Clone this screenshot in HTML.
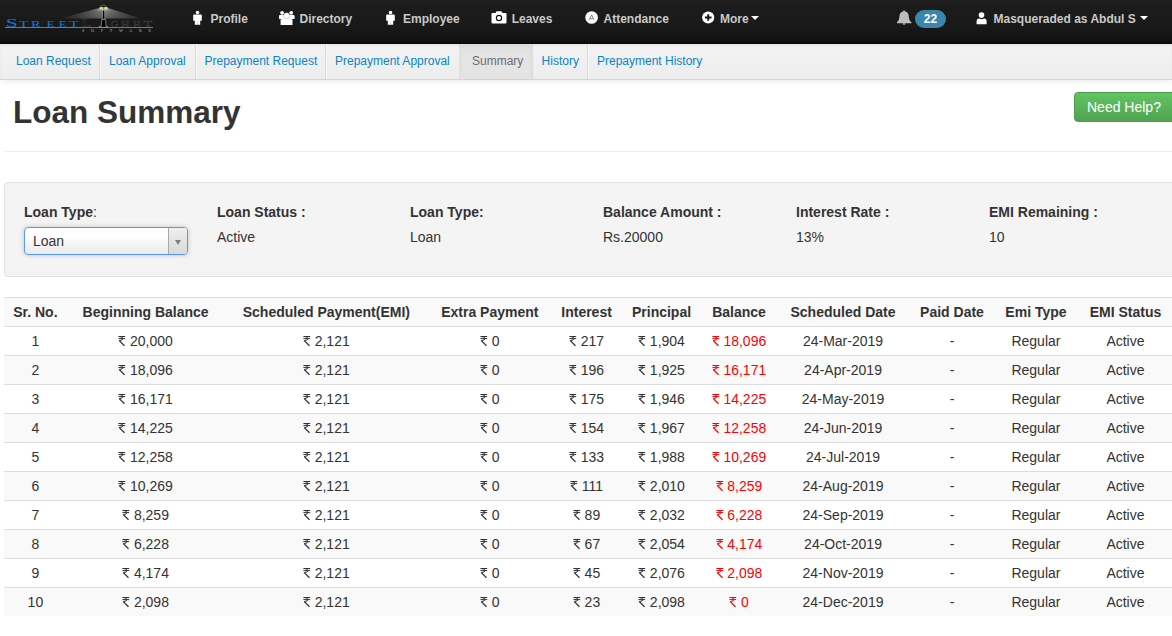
<!DOCTYPE html>
<html><head><meta charset="utf-8">
<style>
*{box-sizing:border-box}
html,body{margin:0;padding:0;width:1172px;height:636px;overflow:hidden;background:#fff}
body{font-family:"Liberation Sans",sans-serif;font-size:14px;color:#333;position:relative}
.abs{position:absolute;white-space:nowrap}
#nav{position:absolute;left:0;top:0;width:1172px;height:44px;background:linear-gradient(#202020,#1c1c1c 10%,#191919 60%,#111 95%,#0a0a0a)}
#nav .t{position:absolute;top:0;line-height:38px;font-weight:bold;font-size:12px;color:#c9c9c9;white-space:nowrap}
#nav svg{position:absolute}
#sub{position:absolute;left:0;top:44px;width:1172px;height:36px;background:linear-gradient(#f3f3f3,#ededed);border-bottom:1px solid #d4d4d4;box-shadow:0 2px 6px rgba(0,0,0,.07), inset 0 2px 2px rgba(0,0,0,.05)}
#sub a{position:absolute;top:0;height:35px;line-height:34px;font-size:12px;color:#0a84c8;text-decoration:none;padding:0 0 0 9px;border-right:1px solid #dadada;box-shadow:1px 0 0 #f7f7f7;white-space:nowrap}
#sub a.act{color:#6d6d6d;background:#e4e4e4;box-shadow:inset 0 3px 5px rgba(0,0,0,.05)}
h1{position:absolute;left:13px;top:90px;margin:0;font-size:31.5px;line-height:44px;font-weight:bold;color:#333}
#hr{position:absolute;left:4px;top:151px;width:1168px;height:1px;background:#eee}
#help{position:absolute;left:1074px;top:92px;width:110px;height:30px;border-radius:4px;background:linear-gradient(#62c462,#51a351);border:1px solid #4a9a4a;color:#fff;font-size:14px;line-height:28px;padding-left:12px;white-space:nowrap}
#well{position:absolute;left:4px;top:182px;width:1180px;height:95px;background:#f4f4f4;border:1px solid #e1e1e1;border-radius:4px}
.lbl{position:absolute;top:204px;font-weight:bold;font-size:14px;line-height:16px;white-space:nowrap}
.val{position:absolute;top:229px;font-size:14px;line-height:16px;white-space:nowrap}
#sel{position:absolute;left:24px;top:227px;width:164px;height:28px;border:1px solid #5897fb;border-radius:4px;background:linear-gradient(#fff 30%,#f3f3f3 70%,#ececec 100%);box-shadow:0 0 5px rgba(0,0,0,.2)}
#sel span{position:absolute;left:8px;top:5px;font-size:14px;line-height:16px}
#sel .arr{position:absolute;right:0;top:0;width:19px;height:26px;border-left:1px solid #aaa;background:linear-gradient(#efefef,#d9d9d9);border-radius:0 3px 3px 0}
#sel .arr:after{content:"";position:absolute;left:5.5px;top:11.5px;border-left:3px solid transparent;border-right:3px solid transparent;border-top:5px solid #808080}
table{position:absolute;left:4px;top:297px;width:1169.71px;table-layout:fixed;border-collapse:collapse;border-spacing:0}
td,th{padding:4px 5px;line-height:20px;text-align:center;border-top:1px solid #ddd;white-space:nowrap;font-size:14px}
th{font-weight:bold}
tr.s td,tr.s th{background:#f9f9f9}
.r{color:#f00}
.rs{display:inline-block;width:7.8px;height:10px;vertical-align:0;position:relative;font-style:normal}
.rs svg{position:absolute;left:0;top:0}
</style></head><body>
<div id="nav">
  <svg style="left:0;top:0" width="160" height="44" viewBox="0 0 160 44">
    <defs>
      <radialGradient id="cone" cx="104" cy="6" r="44" gradientUnits="userSpaceOnUse">
        <stop offset="0" stop-color="#9a9a9a"/><stop offset="0.35" stop-color="#5e5e5e"/><stop offset="1" stop-color="#1e1e1e"/>
      </radialGradient>
      <linearGradient id="fade" x1="0" y1="0" x2="0" y2="1"><stop offset="0" stop-color="#fff" stop-opacity="1"/><stop offset="1" stop-color="#fff" stop-opacity="0.55"/></linearGradient>
      <mask id="m"><rect x="0" y="0" width="160" height="44" fill="url(#fade)"/></mask>
    </defs>
    <polygon points="101,7.5 106.5,7.5 141,18.5 60,18.5" fill="url(#cone)" mask="url(#m)"/>
    <text transform="translate(11.80,27) scale(1.85,1)" text-anchor="middle" font-family="Liberation Serif" font-size="11.6" fill="#1a74cc">S</text>
    <text transform="translate(23.70,27) scale(2.00,1)" text-anchor="middle" font-family="Liberation Serif" font-size="7.6" fill="#1a74cc">T</text>
    <text transform="translate(35.80,27) scale(1.90,1)" text-anchor="middle" font-family="Liberation Serif" font-size="7.6" fill="#1a74cc">R</text>
    <text transform="translate(50.50,27) scale(1.75,1)" text-anchor="middle" font-family="Liberation Serif" font-size="7.6" fill="#1a74cc">E</text>
    <text transform="translate(62.60,27) scale(1.75,1)" text-anchor="middle" font-family="Liberation Serif" font-size="7.6" fill="#1a74cc">E</text>
    <text transform="translate(74.00,27) scale(2.00,1)" text-anchor="middle" font-family="Liberation Serif" font-size="7.6" fill="#1a74cc">T</text>
    <text transform="translate(86.40,27) scale(1.35,1)" text-anchor="middle" font-family="Liberation Serif" font-size="11.6" fill="#000" stroke="#3a3a3a" stroke-width="0.5">L</text>
    <text transform="translate(114.50,27) scale(1.30,1)" text-anchor="middle" font-family="Liberation Serif" font-size="7.6" fill="#000" stroke="#3a3a3a" stroke-width="0.5">G</text>
    <text transform="translate(125.20,27) scale(1.45,1)" text-anchor="middle" font-family="Liberation Serif" font-size="7.6" fill="#000" stroke="#3a3a3a" stroke-width="0.5">H</text>
    <text transform="translate(136.80,27) scale(1.30,1)" text-anchor="middle" font-family="Liberation Serif" font-size="7.6" fill="#000" stroke="#3a3a3a" stroke-width="0.5">H</text>
    <text transform="translate(148.00,27) scale(1.90,1)" text-anchor="middle" font-family="Liberation Serif" font-size="7.6" fill="#000" stroke="#3a3a3a" stroke-width="0.5">T</text>
    <rect x="5" y="27" width="148" height="1" fill="#777"/>
    <text x="82" y="32.3" font-family="Liberation Serif" font-size="4.2" fill="#b8b8b8" textLength="69" lengthAdjust="spacing">SOFTWARE</text>
    <path d="M102.6,10 h2 l0.3,9.3 h-2.6z" fill="#000" stroke="#d8d8d8" stroke-width="0.5"/>
    <path d="M101.8,19.6 h3.8 l0.5,6.8 h1.6 v0.9 h-8.4 v-0.9 h1.8z" fill="#000" stroke="#dcdcdc" stroke-width="0.5"/>
    <rect x="98" y="9.6" width="11" height="0.7" fill="#bbb"/>
    <path d="M100,7.3 q3.5,-4.5 7,0z" fill="#000" stroke="#ccc" stroke-width="0.5"/>
    <rect x="99.6" y="7.2" width="3.4" height="2.2" fill="#e6df8a"/>
    <rect x="104.2" y="7.2" width="3.4" height="2.2" fill="#e6df8a"/>
  </svg>
  <!-- Profile -->
  <svg style="left:193px;top:10px" width="10" height="15" viewBox="0 0 10 15"><circle cx="4.5" cy="2.6" r="1.75" fill="#fff"/><path d="M0.2,5.2 q0,-0.8 0.8,-0.8 h7 q0.8,0 0.8,0.8 v5.6 h-1.6 v4 h-5.4 v-4 h-1.6z" fill="#fff"/><path d="M4.5,11.6 v3.2" stroke="#bbb" stroke-width="0.5"/></svg>
  <span class="t" style="left:210.5px">Profile</span>
  <!-- Directory -->
  <svg style="left:279px;top:10px" width="16" height="15" viewBox="0 0 16 15"><circle cx="3.1" cy="2.8" r="1.9" fill="#fff"/><circle cx="12.2" cy="2.8" r="1.9" fill="#fff"/><path d="M0,6 q0,-1 1,-1 h13.6 q1,0 1,1 v3 h-15.6z" fill="#fff"/><circle cx="7.6" cy="5.8" r="3" fill="#fff" stroke="#9a9a9a" stroke-width="0.4"/><path d="M1.6,14.9 v-4.6 q0,-1.4 1.4,-1.4 h9.1 q1.4,0 1.4,1.4 v4.6z" fill="#fff"/></svg>
  <span class="t" style="left:299.5px">Directory</span>
  <!-- Employee -->
  <svg style="left:386px;top:10px" width="10" height="15" viewBox="0 0 10 15"><circle cx="4.5" cy="2.6" r="1.75" fill="#fff"/><path d="M0.2,5.2 q0,-0.8 0.8,-0.8 h7 q0.8,0 0.8,0.8 v5.6 h-1.6 v4 h-5.4 v-4 h-1.6z" fill="#fff"/><path d="M4.5,11.6 v3.2" stroke="#bbb" stroke-width="0.5"/></svg>
  <span class="t" style="left:403px">Employee</span>
  <!-- Leaves camera -->
  <svg style="left:491px;top:11px" width="16" height="13" viewBox="0 0 16 13"><path d="M0.5,3 q0,-1 1,-1 h3 l1,-1.8 h5 l1,1.8 h3 q1,0 1,1 v8.5 q0,1 -1,1 h-13 q-1,0 -1,-1z" fill="#fff"/><circle cx="8" cy="7" r="3.2" fill="#151515"/><circle cx="8" cy="7" r="2" fill="#fff"/></svg>
  <span class="t" style="left:511.7px">Leaves</span>
  <!-- Attendance -->
  <svg style="left:584.5px;top:11px" width="14" height="14" viewBox="0 0 14 14"><circle cx="6.6" cy="6.5" r="6.3" fill="#fff"/><path d="M4.2,8.8 L6.6,3.8 L9,8.8 M5.2,7.6 h2.8" stroke="#666" stroke-width="0.8" fill="none"/></svg>
  <span class="t" style="left:603.5px">Attendance</span>
  <!-- More -->
  <svg style="left:701.5px;top:11px" width="14" height="14" viewBox="0 0 14 14"><circle cx="6.2" cy="6.5" r="6.1" fill="#fff"/><path d="M6.2,3.2 v6.6 M2.9,6.5 h6.6" stroke="#151515" stroke-width="1.9"/></svg>
  <span class="t" style="left:720px">More</span>
  <svg style="left:751px;top:15.5px" width="9" height="5" viewBox="0 0 9 5"><path d="M0,0 h8 l-4,4z" fill="#fff"/></svg>
  <!-- bell -->
  <svg style="left:896.5px;top:10px" width="15" height="15" viewBox="0 0 15 15"><path d="M7,0.3 q0.8,0 0.8,0.9 q4,0.8 4,5.5 q0,3.8 2.8,6 v0.6 h-15 v-0.6 q2.8,-2.2 2.8,-6 q0,-4.7 4,-5.5 q0,-0.9 0.6,-0.9z M5.6,13.6 h3 q0,1.2 -1.5,1.2 q-1.5,0 -1.5,-1.2z" fill="#bdbdbd"/></svg>
  <div class="abs" style="left:915px;top:10px;width:31px;height:18px;border-radius:9px;background:#3a87ad;color:#fff;font-weight:bold;font-size:12px;line-height:18px;text-align:center">22</div>
  <!-- user -->
  <svg style="left:975.5px;top:11.5px" width="12" height="13" viewBox="0 0 12 13"><circle cx="5.5" cy="3.1" r="2.8" fill="#fff"/><path d="M0.6,12.2 v-3 q0,-2.6 2.6,-2.8 q2.4,1.5 4.8,0 q2.6,0.2 2.6,2.8 v3z" fill="#fff"/></svg>
  <span class="t" style="left:993.5px">Masqueraded as Abdul S</span>
  <svg style="left:1140px;top:15.5px" width="9" height="5" viewBox="0 0 9 5"><path d="M0,0 h8 l-4,4z" fill="#fff"/></svg>
</div>

<div id="sub">
  <a style="left:0;width:100px;padding-left:16px">Loan Request</a>
  <a style="left:100px;width:96px">Loan Approval</a>
  <a style="left:196px;width:130px;padding-left:8.5px">Prepayment Request</a>
  <a style="left:326px;width:133px;border-right:0;box-shadow:none">Prepayment Approval</a>
  <a class="act" style="left:459px;width:74px;padding-left:13px">Summary</a>
  <a style="left:533px;width:55px;padding-left:8.6px">History</a>
  <a style="left:588px;width:130px;border-right:0;box-shadow:none">Prepayment History</a>
</div>

<h1>Loan Summary</h1>
<div id="help">Need Help?</div>
<div id="hr"></div>

<div id="well"></div>
<div class="lbl" style="left:24px">Loan Type<span style="font-weight:normal">:</span></div>
<div id="sel"><span>Loan</span><div class="arr"></div></div>
<div class="lbl" style="left:217px">Loan Status :</div>
<div class="val" style="left:217px">Active</div>
<div class="lbl" style="left:410px">Loan Type:</div>
<div class="val" style="left:410px">Loan</div>
<div class="lbl" style="left:603px">Balance Amount :</div>
<div class="val" style="left:603px">Rs.20000</div>
<div class="lbl" style="left:796px">Interest Rate :</div>
<div class="val" style="left:796px">13%</div>
<div class="lbl" style="left:989px">EMI Remaining :</div>
<div class="val" style="left:989px">10</div>

<svg width="0" height="0" style="position:absolute"><defs><g id="rup" stroke="currentColor" fill="none"><path d="M0.4,0.5 H7.2 M0.4,2.6 H7.2 M1.4,0.5 Q4.9,0.6 4.9,2.6 Q4.9,4.4 1.2,4.6" stroke-width="1"/><path d="M1.3,4.6 L6.5,9.8" stroke-width="1.3"/></g></defs></svg>
<table id="tbl">
<colgroup><col style="width:62.78px"><col style="width:157.66px"><col style="width:203.88px"><col style="width:122.97px"><col style="width:70.60px"><col style="width:79.33px"><col style="width:75.56px"><col style="width:132.53px"><col style="width:85.42px"><col style="width:82.56px"><col style="width:96.42px"></colgroup>
<tr class="s"><th>Sr. No.</th><th>Beginning Balance</th><th>Scheduled Payment(EMI)</th><th>Extra Payment</th><th>Interest</th><th>Principal</th><th>Balance</th><th>Scheduled Date</th><th>Paid Date</th><th>Emi Type</th><th>EMI Status</th></tr>
<tr><td>1</td><td><i class="rs"><svg width="8" height="11"><use href="#rup"/></svg></i> 20,000</td><td><i class="rs"><svg width="8" height="11"><use href="#rup"/></svg></i> 2,121</td><td><i class="rs"><svg width="8" height="11"><use href="#rup"/></svg></i> 0</td><td><i class="rs"><svg width="8" height="11"><use href="#rup"/></svg></i> 217</td><td><i class="rs"><svg width="8" height="11"><use href="#rup"/></svg></i> 1,904</td><td class="r"><i class="rs"><svg width="8" height="11"><use href="#rup"/></svg></i> 18,096</td><td>24-Mar-2019</td><td>-</td><td>Regular</td><td>Active</td></tr>
<tr class="s"><td>2</td><td><i class="rs"><svg width="8" height="11"><use href="#rup"/></svg></i> 18,096</td><td><i class="rs"><svg width="8" height="11"><use href="#rup"/></svg></i> 2,121</td><td><i class="rs"><svg width="8" height="11"><use href="#rup"/></svg></i> 0</td><td><i class="rs"><svg width="8" height="11"><use href="#rup"/></svg></i> 196</td><td><i class="rs"><svg width="8" height="11"><use href="#rup"/></svg></i> 1,925</td><td class="r"><i class="rs"><svg width="8" height="11"><use href="#rup"/></svg></i> 16,171</td><td>24-Apr-2019</td><td>-</td><td>Regular</td><td>Active</td></tr>
<tr><td>3</td><td><i class="rs"><svg width="8" height="11"><use href="#rup"/></svg></i> 16,171</td><td><i class="rs"><svg width="8" height="11"><use href="#rup"/></svg></i> 2,121</td><td><i class="rs"><svg width="8" height="11"><use href="#rup"/></svg></i> 0</td><td><i class="rs"><svg width="8" height="11"><use href="#rup"/></svg></i> 175</td><td><i class="rs"><svg width="8" height="11"><use href="#rup"/></svg></i> 1,946</td><td class="r"><i class="rs"><svg width="8" height="11"><use href="#rup"/></svg></i> 14,225</td><td>24-May-2019</td><td>-</td><td>Regular</td><td>Active</td></tr>
<tr class="s"><td>4</td><td><i class="rs"><svg width="8" height="11"><use href="#rup"/></svg></i> 14,225</td><td><i class="rs"><svg width="8" height="11"><use href="#rup"/></svg></i> 2,121</td><td><i class="rs"><svg width="8" height="11"><use href="#rup"/></svg></i> 0</td><td><i class="rs"><svg width="8" height="11"><use href="#rup"/></svg></i> 154</td><td><i class="rs"><svg width="8" height="11"><use href="#rup"/></svg></i> 1,967</td><td class="r"><i class="rs"><svg width="8" height="11"><use href="#rup"/></svg></i> 12,258</td><td>24-Jun-2019</td><td>-</td><td>Regular</td><td>Active</td></tr>
<tr><td>5</td><td><i class="rs"><svg width="8" height="11"><use href="#rup"/></svg></i> 12,258</td><td><i class="rs"><svg width="8" height="11"><use href="#rup"/></svg></i> 2,121</td><td><i class="rs"><svg width="8" height="11"><use href="#rup"/></svg></i> 0</td><td><i class="rs"><svg width="8" height="11"><use href="#rup"/></svg></i> 133</td><td><i class="rs"><svg width="8" height="11"><use href="#rup"/></svg></i> 1,988</td><td class="r"><i class="rs"><svg width="8" height="11"><use href="#rup"/></svg></i> 10,269</td><td>24-Jul-2019</td><td>-</td><td>Regular</td><td>Active</td></tr>
<tr class="s"><td>6</td><td><i class="rs"><svg width="8" height="11"><use href="#rup"/></svg></i> 10,269</td><td><i class="rs"><svg width="8" height="11"><use href="#rup"/></svg></i> 2,121</td><td><i class="rs"><svg width="8" height="11"><use href="#rup"/></svg></i> 0</td><td><i class="rs"><svg width="8" height="11"><use href="#rup"/></svg></i> 111</td><td><i class="rs"><svg width="8" height="11"><use href="#rup"/></svg></i> 2,010</td><td class="r"><i class="rs"><svg width="8" height="11"><use href="#rup"/></svg></i> 8,259</td><td>24-Aug-2019</td><td>-</td><td>Regular</td><td>Active</td></tr>
<tr><td>7</td><td><i class="rs"><svg width="8" height="11"><use href="#rup"/></svg></i> 8,259</td><td><i class="rs"><svg width="8" height="11"><use href="#rup"/></svg></i> 2,121</td><td><i class="rs"><svg width="8" height="11"><use href="#rup"/></svg></i> 0</td><td><i class="rs"><svg width="8" height="11"><use href="#rup"/></svg></i> 89</td><td><i class="rs"><svg width="8" height="11"><use href="#rup"/></svg></i> 2,032</td><td class="r"><i class="rs"><svg width="8" height="11"><use href="#rup"/></svg></i> 6,228</td><td>24-Sep-2019</td><td>-</td><td>Regular</td><td>Active</td></tr>
<tr class="s"><td>8</td><td><i class="rs"><svg width="8" height="11"><use href="#rup"/></svg></i> 6,228</td><td><i class="rs"><svg width="8" height="11"><use href="#rup"/></svg></i> 2,121</td><td><i class="rs"><svg width="8" height="11"><use href="#rup"/></svg></i> 0</td><td><i class="rs"><svg width="8" height="11"><use href="#rup"/></svg></i> 67</td><td><i class="rs"><svg width="8" height="11"><use href="#rup"/></svg></i> 2,054</td><td class="r"><i class="rs"><svg width="8" height="11"><use href="#rup"/></svg></i> 4,174</td><td>24-Oct-2019</td><td>-</td><td>Regular</td><td>Active</td></tr>
<tr><td>9</td><td><i class="rs"><svg width="8" height="11"><use href="#rup"/></svg></i> 4,174</td><td><i class="rs"><svg width="8" height="11"><use href="#rup"/></svg></i> 2,121</td><td><i class="rs"><svg width="8" height="11"><use href="#rup"/></svg></i> 0</td><td><i class="rs"><svg width="8" height="11"><use href="#rup"/></svg></i> 45</td><td><i class="rs"><svg width="8" height="11"><use href="#rup"/></svg></i> 2,076</td><td class="r"><i class="rs"><svg width="8" height="11"><use href="#rup"/></svg></i> 2,098</td><td>24-Nov-2019</td><td>-</td><td>Regular</td><td>Active</td></tr>
<tr class="s"><td>10</td><td><i class="rs"><svg width="8" height="11"><use href="#rup"/></svg></i> 2,098</td><td><i class="rs"><svg width="8" height="11"><use href="#rup"/></svg></i> 2,121</td><td><i class="rs"><svg width="8" height="11"><use href="#rup"/></svg></i> 0</td><td><i class="rs"><svg width="8" height="11"><use href="#rup"/></svg></i> 23</td><td><i class="rs"><svg width="8" height="11"><use href="#rup"/></svg></i> 2,098</td><td class="r"><i class="rs"><svg width="8" height="11"><use href="#rup"/></svg></i> 0</td><td>24-Dec-2019</td><td>-</td><td>Regular</td><td>Active</td></tr>
</table>
</body></html>
